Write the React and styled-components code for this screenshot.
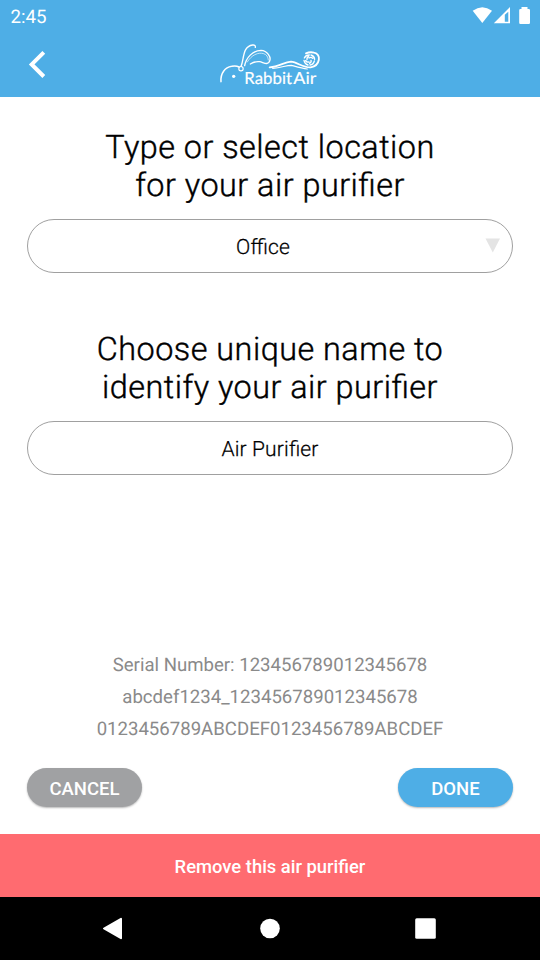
import React from "react";
import styled, { createGlobalStyle } from "styled-components";

const BLUE = "#4eaee6";

const GlobalStyle = createGlobalStyle`
  * { box-sizing: border-box; }
  body { margin: 0; background: #fff; font-family: Roboto, sans-serif; }
  svg { display: block; }
`;

const Screen = styled.div`
  width: 540px;
  height: 960px;
  display: flex;
  flex-direction: column;
  overflow: hidden;
  background: #fff;
  text-rendering: geometricPrecision;
`;

const StatusBar = styled.div`
  height: 32px;
  flex: none;
  display: flex;
  justify-content: space-between;
  padding-left: 10.5px;
  background: ${BLUE};
  color: #fff;
  font-size: 18.7px;
  line-height: 34px;
`;

const Header = styled.header`
  height: 65px;
  flex: none;
  display: grid;
  grid-template-columns: 80px 1fr 80px;
  justify-items: center;
  background: ${BLUE};
`;

const BackButton = styled.button`
  width: 80px;
  height: 64px;
  padding: 0;
  border: 0;
  background: none;
`;

const Main = styled.main`
  flex: 1;
  display: flex;
  flex-direction: column;
  padding: 31px 27px 0;
`;

const Title = styled.h1`
  margin: 0;
  height: 78px;
  font-size: 32.4px;
  font-weight: 300;
  letter-spacing: 0.48px;
  font-feature-settings: "liga" 1;
  -webkit-text-stroke: 0.4px #000;
  line-height: 38.4px;
  text-align: center;
  color: #000;
`;

const Field = styled.div`
  height: 54px;
  flex: none;
  margin: 13px 0 ${(p) => p.$after || 0}px;
  display: grid;
  grid-template-columns: ${(p) => p.$columns};
  align-items: center;
  border: 1.3px solid #a0a0a0;
  border-radius: 27px;
  color: #000;
  font-size: 21px;
  font-weight: 300;
  letter-spacing: 0.15px;
  font-feature-settings: "liga" 1;
  -webkit-text-stroke: 0.25px #000;
  text-align: center;
`;

const FieldValue = styled.span`
  grid-column: 2;
  padding-top: 4px;
`;

const Details = styled.div`
  margin-top: 174px;
  display: flex;
  flex-direction: column;
  align-items: center;
  color: #8a8a8a;
  font-size: 18.6px;
  line-height: 32px;
`;

const Actions = styled.div`
  margin-top: 23px;
  display: flex;
  justify-content: space-between;
`;

const PillButton = styled.button`
  width: 115px;
  height: 39px;
  padding: 2px 0 0;
  border: 0;
  border-radius: 20px;
  background: ${(p) => p.$color};
  box-shadow: 0 1px 2px rgba(0, 0, 0, 0.28);
  color: #fff;
  font: 500 18.5px Roboto, sans-serif;
`;

const RemoveButton = styled.button`
  height: 63px;
  flex: none;
  padding: 2px 0 0;
  border: 0;
  background: #ff6b70;
  color: #fff;
  font: 500 18.4px Roboto, sans-serif;
`;

const NavBar = styled.nav`
  height: 63px;
  flex: none;
  background: #000;
`;

function StatusIcons() {
  return (
    <svg width="80" height="32" viewBox="0 0 80 32" fill="#fff">
      <path d="M12.7 10.7Q22.3 3.6 32 10.7L22.3 23Z" />
      <path fillRule="evenodd" d="M50 7V23.3H33.8ZM44.8 14.8V21.8H48.3V11.7Z" />
      <path d="M61.5 7h6v2h1.3q1.2 0 1.2 1.2v12.6q0 1.2-1.2 1.2h-8.4q-1.2 0-1.2-1.2V10.2q0-1.2 1.2-1.2h1.1Z" />
    </svg>
  );
}

function Logo() {
  return (
    <svg width="120" height="60" viewBox="0 0 360 180" fill="none" stroke="#fff" strokeLinecap="round" strokeLinejoin="round">
      <path d="M33 137C31 112 45 94 65 91Q78 88 87 93" strokeWidth="4.5" />
      <circle cx="93" cy="98" r="6.5" strokeWidth="3.5" />
      <path d="M93 91C103 71 96 31 128 27Q137 26 136 34" strokeWidth="4" />
      <path d="M104 89C108 66 128 43 153 43C172 44 184 63 179 75C174 89 162 80 149 77Q136 75 121 84" strokeWidth="4" />
      <path d="M112 78C124 57 145 48 161 53Q174 57 175 72" strokeWidth="2" />
      <path d="M179 94C207 93 222 78 243 77C263 79 281 96 302 94C331 89 335 53 312 50Q300 47 288 52" strokeWidth="5.5" />
      <path d="M188 97C216 95 227 88 244 88C259 92 276 97 292 99" strokeWidth="3.5" />
      <path d="M283 66Q287 57 298 57M303 57Q313 60 314 70M313 75Q310 86 300 87M294 87Q284 84 282 73M297 66Q303 62 308 67M303 73Q305 79 299 82M297 78Q290 80 287 74M291 71Q290 64 296 62" strokeWidth="4" />
      <circle cx="71" cy="121" r="5" fill="#fff" stroke="none" />
      <text x="103" y="143" fill="#fff" strokeWidth="0.5" fontFamily="Lato, sans-serif" fontSize="50" textLength="143" lengthAdjust="spacingAndGlyphs">Rabbit</text>
      <text x="250" y="143" fill="#fff" strokeWidth="0.5" fontFamily="Lato, sans-serif" fontSize="50" textLength="69" lengthAdjust="spacingAndGlyphs">Air</text>
    </svg>
  );
}

export default function App() {
  return (
    <>
      <GlobalStyle />
      <Screen>
        <StatusBar>
          <span>2:45</span>
          <StatusIcons />
        </StatusBar>
        <Header>
          <BackButton aria-label="Back">
            <svg width="80" height="64" viewBox="0 0 80 64" fill="none" stroke="#fff" strokeWidth="4">
              <path d="M43.8 20.3 31.7 32.4 43.8 44.5" />
            </svg>
          </BackButton>
          <svg width="120" height="64" viewBox="0 -4 120 64">
            <Logo />
          </svg>
        </Header>
        <Main>
          <Title>Type or select location<br />for your air purifier</Title>
          <Field $after={57} $columns="26px 1fr 40px">
            <FieldValue>Office</FieldValue>
            <svg width="40" height="40" viewBox="0 0 40 40" fill="#e4e4e4">
              <path d="M13.5 12.5h14.5l-7.2 14Z" />
            </svg>
          </Field>
          <Title>Choose unique name to<br />identify your air purifier</Title>
          <Field $columns="40px 1fr 40px">
            <FieldValue>Air Purifier</FieldValue>
          </Field>
          <Details>
            <span>Serial Number: 123456789012345678</span>
            <span>abcdef1234_123456789012345678</span>
            <span>0123456789ABCDEF0123456789ABCDEF</span>
          </Details>
          <Actions>
            <PillButton $color="#a0a1a3">CANCEL</PillButton>
            <PillButton $color={BLUE}>DONE</PillButton>
          </Actions>
        </Main>
        <RemoveButton>Remove this air purifier</RemoveButton>
        <NavBar>
          <svg width="540" height="63" viewBox="0 897 540 63" fill="#fff" stroke="#fff" strokeLinejoin="round">
            <path d="M104 928.5 121 918.8V938.2Z" strokeWidth="2" />
            <circle cx="270" cy="928.5" r="9.8" stroke="none" />
            <rect x="415.2" y="918.3" width="20.6" height="20.5" rx="1.5" stroke="none" />
          </svg>
        </NavBar>
      </Screen>
    </>
  );
}
